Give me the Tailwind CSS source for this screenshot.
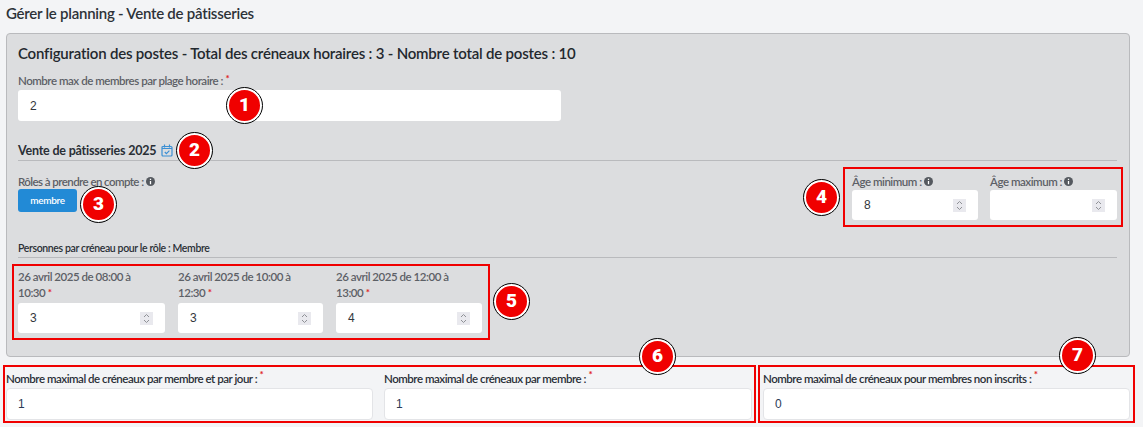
<!DOCTYPE html>
<html lang="fr">
  <head>
    <meta charset="UTF-8">
    <meta name="viewport" content="width=device-width, initial-scale=1.0">
    <title>Gérer le planning</title>
    <script src="https://cdn.jsdelivr.net/npm/@tailwindcss/browser@4"></script>
  </head>
  <body class="relative h-[427px] w-[1143px] overflow-hidden bg-[#f3f4f6] font-['Lato',sans-serif] text-[#2a2f36]">
    <h1 class="flex h-[33px] items-start pl-[6px] pt-[3px] text-[15px] leading-[20px] font-semibold tracking-[-0.25px] text-[#2d3238]">Gérer le planning - Vente de pâtisseries</h1>

    <!-- carte postes -->
    <section class="ml-[6px] h-[324px] w-[1124px] rounded-[4px] border border-[#b9babd] bg-[#dcdddf] px-[11px] pt-[9px]">
      <h2 class="h-[21px] text-[15px] leading-[21px] font-semibold tracking-[-0.2px] text-[#23282e]">Configuration des postes - Total des créneaux horaires : 3 - Nombre total de postes : 10</h2>

      <label class="mt-[9px] block h-[16px] text-[11.5px] leading-[16px] font-semibold tracking-[-0.47px] text-[#5c6066]">Nombre max de membres par plage horaire : <span class="align-[3px] text-[10px] leading-none font-bold text-[#e02424]">*</span></label>
      <div class="mt-[1px] flex h-[31px] w-[543px] items-center rounded-[3px] bg-white pl-[12px] font-['Liberation_Sans',sans-serif] text-[12px] text-[#33373d]">2</div>

      <div class="mt-[22px] flex h-[18px] w-[1099px] items-center gap-[5px] border-b border-[#b9babd] pb-[2px]">
        <span class="text-[12.5px] leading-[16px] font-bold tracking-[-0.2px] text-[#2a2f36]">Vente de pâtisseries 2025</span>
        <svg class="h-[13px] w-[12px]" viewBox="0 0 12 13" fill="none" stroke="#3b8fd4" stroke-width="1.2">
          <rect x="1" y="2.5" width="10" height="9.5" rx="1"/>
          <path d="M3.5 0.5v3M8.5 0.5v3M1 4.5h10M3.8 8l1.6 1.6L8.4 6.6"/>
        </svg>
      </div>

      <div class="flex w-[1099px] items-start justify-between pt-[6px]">
        <div class="pt-[7px]">
          <div class="flex h-[15px] items-center gap-[2px] text-[11.5px] font-semibold tracking-[-0.57px] text-[#5c6066]">Rôles à prendre en compte :
            <svg class="h-[9px] w-[9px]" viewBox="0 0 10 10"><circle cx="5" cy="5" r="5" fill="#55595f"/><path d="M5 2v1.2M5 4.5V8" stroke="#fff" stroke-width="1.4"/></svg>
          </div>
          <button class="block h-[23px] w-[59px] rounded-[3px] bg-[#228ad6] text-[10px] font-semibold tracking-[-0.3px] text-white">membre</button>
        </div>

        <div class="-mr-[6px] flex h-[60px] w-[280px] gap-[12px] border-2 border-[#f00000] pl-[7px] pr-[4px] pt-[4px]">
          <div class="w-[126px]">
            <div class="flex h-[17px] items-center gap-[2px] text-[11.5px] font-semibold tracking-[-0.47px] text-[#5c6066]">Âge minimum :
              <svg class="h-[9px] w-[9px]" viewBox="0 0 10 10"><circle cx="5" cy="5" r="5" fill="#55595f"/><path d="M5 2v1.2M5 4.5V8" stroke="#fff" stroke-width="1.4"/></svg>
            </div>
            <div class="flex h-[30px] items-center justify-between rounded-[3px] bg-white pl-[12px] pr-[12px] font-['Liberation_Sans',sans-serif] text-[12px] text-[#33373d]">8
              <svg class="h-[13px] w-[13px] bg-[#e9e9ee]" viewBox="0 0 13 13" fill="none" stroke="#8f9196"><path d="M4 5l2.5-2.5L9 5M4 8l2.5 2.5L9 8"/></svg>
            </div>
          </div>
          <div class="w-[127px]">
            <div class="flex h-[17px] items-center gap-[2px] text-[11.5px] font-semibold tracking-[-0.47px] text-[#5c6066]">Âge maximum :
              <svg class="h-[9px] w-[9px]" viewBox="0 0 10 10"><circle cx="5" cy="5" r="5" fill="#55595f"/><path d="M5 2v1.2M5 4.5V8" stroke="#fff" stroke-width="1.4"/></svg>
            </div>
            <div class="flex h-[30px] items-center justify-end rounded-[3px] bg-white pr-[12px]">
              <svg class="h-[13px] w-[13px] bg-[#e9e9ee]" viewBox="0 0 13 13" fill="none" stroke="#8f9196"><path d="M4 5l2.5-2.5L9 5M4 8l2.5 2.5L9 8"/></svg>
            </div>
          </div>
        </div>
      </div>

      <div class="mt-[14px] h-[17px] w-[1099px] border-b border-[#b9babd] text-[10.5px] leading-[15px] font-semibold tracking-[-0.37px] text-[#2a2f36]">Personnes par créneau pour le rôle : Membre</div>

      <div class="-ml-[6px] mt-[6px] flex h-[76px] w-[478px] gap-[13px] border-2 border-[#f00000] pl-[4px] pt-[3px]">
        <div class="w-[147px]">
          <div class="h-[34px] text-[11.5px] leading-[16px] font-semibold tracking-[-0.47px] text-[#5c6066]">26 avril 2025 de 08:00 à<br>10:30 <span class="align-[1px] text-[10px] leading-none font-bold text-[#e02424]">*</span></div>
          <div class="flex h-[30px] items-center justify-between rounded-[3px] bg-white pl-[12px] pr-[12px] font-['Liberation_Sans',sans-serif] text-[12px] text-[#33373d]">3
            <svg class="h-[13px] w-[13px] bg-[#e9e9ee]" viewBox="0 0 13 13" fill="none" stroke="#8f9196"><path d="M4 5l2.5-2.5L9 5M4 8l2.5 2.5L9 8"/></svg>
          </div>
        </div>
        <div class="w-[145px]">
          <div class="h-[34px] text-[11.5px] leading-[16px] font-semibold tracking-[-0.47px] text-[#5c6066]">26 avril 2025 de 10:00 à<br>12:30 <span class="align-[1px] text-[10px] leading-none font-bold text-[#e02424]">*</span></div>
          <div class="flex h-[30px] items-center justify-between rounded-[3px] bg-white pl-[12px] pr-[12px] font-['Liberation_Sans',sans-serif] text-[12px] text-[#33373d]">3
            <svg class="h-[13px] w-[13px] bg-[#e9e9ee]" viewBox="0 0 13 13" fill="none" stroke="#8f9196"><path d="M4 5l2.5-2.5L9 5M4 8l2.5 2.5L9 8"/></svg>
          </div>
        </div>
        <div class="w-[146px]">
          <div class="h-[34px] text-[11.5px] leading-[16px] font-semibold tracking-[-0.47px] text-[#5c6066]">26 avril 2025 de 12:00 à<br>13:00 <span class="align-[1px] text-[10px] leading-none font-bold text-[#e02424]">*</span></div>
          <div class="flex h-[30px] items-center justify-between rounded-[3px] bg-white pl-[12px] pr-[12px] font-['Liberation_Sans',sans-serif] text-[12px] text-[#33373d]">4
            <svg class="h-[13px] w-[13px] bg-[#e9e9ee]" viewBox="0 0 13 13" fill="none" stroke="#8f9196"><path d="M4 5l2.5-2.5L9 5M4 8l2.5 2.5L9 8"/></svg>
          </div>
        </div>
      </div>
    </section>

    <!-- limites -->
    <div class="ml-[3px] mt-[8px] flex gap-[2px]">
      <div class="flex h-[58px] w-[753px] gap-[11px] border-2 border-[#f00000] pl-[1px] pr-[1px]">
        <div class="w-[367px]">
          <div class="h-[21px] pt-[2px] text-[11.5px] leading-[16px] font-semibold tracking-[-0.48px] whitespace-nowrap text-[#2a2f36]">Nombre maximal de créneaux par membre et par jour : <span class="align-[5px] text-[10px] leading-none font-bold text-[#e02424]">*</span></div>
          <div class="flex h-[32px] items-center rounded-[4px] border border-[#e3e4e7] bg-white pl-[11px] font-['Liberation_Sans',sans-serif] text-[12px] text-[#2b3a55]">1</div>
        </div>
        <div class="w-[368px]">
          <div class="h-[21px] pt-[2px] text-[11.5px] leading-[16px] font-semibold tracking-[-0.48px] whitespace-nowrap text-[#2a2f36]">Nombre maximal de créneaux par membre : <span class="align-[5px] text-[10px] leading-none font-bold text-[#e02424]">*</span></div>
          <div class="flex h-[32px] items-center rounded-[4px] border border-[#e3e4e7] bg-white pl-[11px] font-['Liberation_Sans',sans-serif] text-[12px] text-[#2b3a55]">1</div>
        </div>
      </div>
      <div class="h-[58px] w-[377px] border-2 border-[#f00000] pl-[3px] pr-[3px]">
        <div class="h-[21px] pt-[2px] text-[11.5px] leading-[16px] font-semibold tracking-[-0.48px] whitespace-nowrap text-[#2a2f36]">Nombre maximal de créneaux pour membres non inscrits : <span class="align-[5px] text-[10px] leading-none font-bold text-[#e02424]">*</span></div>
        <div class="flex h-[32px] items-center rounded-[4px] border border-[#e3e4e7] bg-white pl-[11px] font-['Liberation_Sans',sans-serif] text-[12px] text-[#2b3a55]">0</div>
      </div>
    </div>

    <!-- pastilles -->
    <span class="absolute left-[227px] top-[88px] flex h-[35px] w-[35px] items-center justify-center rounded-full border-2 border-white bg-[#f00000] font-['Roboto',sans-serif] text-[19px] font-black text-white outline outline-1 outline-black">1</span>
    <span class="absolute left-[177px] top-[133px] flex h-[35px] w-[35px] items-center justify-center rounded-full border-2 border-white bg-[#f00000] font-['Roboto',sans-serif] text-[19px] font-black text-white outline outline-1 outline-black">2</span>
    <span class="absolute left-[81px] top-[187px] flex h-[35px] w-[35px] items-center justify-center rounded-full border-2 border-white bg-[#f00000] font-['Roboto',sans-serif] text-[19px] font-black text-white outline outline-1 outline-black">3</span>
    <span class="absolute left-[804px] top-[180px] flex h-[35px] w-[35px] items-center justify-center rounded-full border-2 border-white bg-[#f00000] font-['Roboto',sans-serif] text-[19px] font-black text-white outline outline-1 outline-black">4</span>
    <span class="absolute left-[494px] top-[284px] flex h-[35px] w-[35px] items-center justify-center rounded-full border-2 border-white bg-[#f00000] font-['Roboto',sans-serif] text-[19px] font-black text-white outline outline-1 outline-black">5</span>
    <span class="absolute left-[640px] top-[339px] flex h-[35px] w-[35px] items-center justify-center rounded-full border-2 border-white bg-[#f00000] font-['Roboto',sans-serif] text-[19px] font-black text-white outline outline-1 outline-black">6</span>
    <span class="absolute left-[1060px] top-[338px] flex h-[35px] w-[35px] items-center justify-center rounded-full border-2 border-white bg-[#f00000] font-['Roboto',sans-serif] text-[19px] font-black text-white outline outline-1 outline-black">7</span>
  </body>
</html>
